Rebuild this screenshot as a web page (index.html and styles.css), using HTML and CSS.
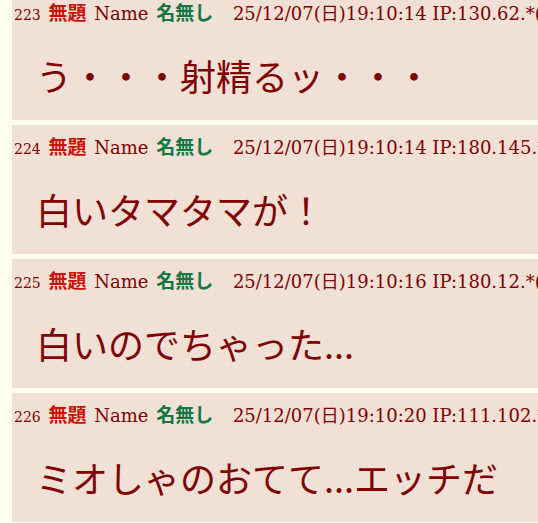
FILE: index.html
```html
<!DOCTYPE html>
<html lang="ja">
<head>
  <meta charset="UTF-8">
  <title>スレッド</title>
  <meta name="viewport" content="width=device-width, initial-scale=1.0">
  <link rel="stylesheet" href="styles.css">
</head>
<body>
<div id="thread">
  <div class="res">
    <div class="res-head">
      <span class="no">223</span>
      <span class="sub">無題</span>
      Name <span class="name">名無し</span>
      <span class="date">25/12/07(日)19:10:14 IP:130.62.*(</span>
    </div>
    <blockquote>う・・・射精るッ・・・</blockquote>
  </div>
  <div class="res">
    <div class="res-head">
      <span class="no">224</span>
      <span class="sub">無題</span>
      Name <span class="name">名無し</span>
      <span class="date">25/12/07(日)19:10:14 IP:180.145.*</span>
    </div>
    <blockquote>白いタマタマが！</blockquote>
  </div>
  <div class="res">
    <div class="res-head">
      <span class="no">225</span>
      <span class="sub">無題</span>
      Name <span class="name">名無し</span>
      <span class="date">25/12/07(日)19:10:16 IP:180.12.*(</span>
    </div>
    <blockquote>白いのでちゃった...</blockquote>
  </div>
  <div class="res">
    <div class="res-head">
      <span class="no">226</span>
      <span class="sub">無題</span>
      Name <span class="name">名無し</span>
      <span class="date">25/12/07(日)19:10:20 IP:111.102.*</span>
    </div>
    <blockquote>ミオしゃのおてて...エッチだ</blockquote>
  </div>
</div>
</body>
</html>
```

FILE: styles.css
```css
body, html {
  margin: 0;
  padding: 0;
  background-color: #ffffee;
  color: #800000;
  overflow: hidden;
}
#thread {
  margin-top: -9px;
  padding-left: 12px;
}
.res {
  background: #f0e0d6;
  height: 129px;
  margin-bottom: 5px;
  width: 526px;
  overflow: hidden;
}
.res-head {
  padding: 10px 0 0 2px;
  height: 24px;
  line-height: 22px;
  font-family: "DejaVu Serif", "Noto Sans CJK JP", serif;
  font-size: 18px;
  word-spacing: 2px;
  white-space: nowrap;
}
.no {
  font-size: 14px;
}
.sub, .name {
  font-family: "Noto Sans CJK JP", sans-serif;
  font-weight: bold;
  font-size: 19px;
}
.sub {
  color: #cc1105;
}
.name {
  color: #117743;
  margin-right: 12px;
}
.date {
  font-size: 18px;
  word-spacing: 0;
}
blockquote {
  margin: 25px 0 0 24px;
  font-family: "Noto Sans CJK JP", sans-serif;
  font-size: 36px;
  line-height: 51px;
  white-space: nowrap;
}
```
